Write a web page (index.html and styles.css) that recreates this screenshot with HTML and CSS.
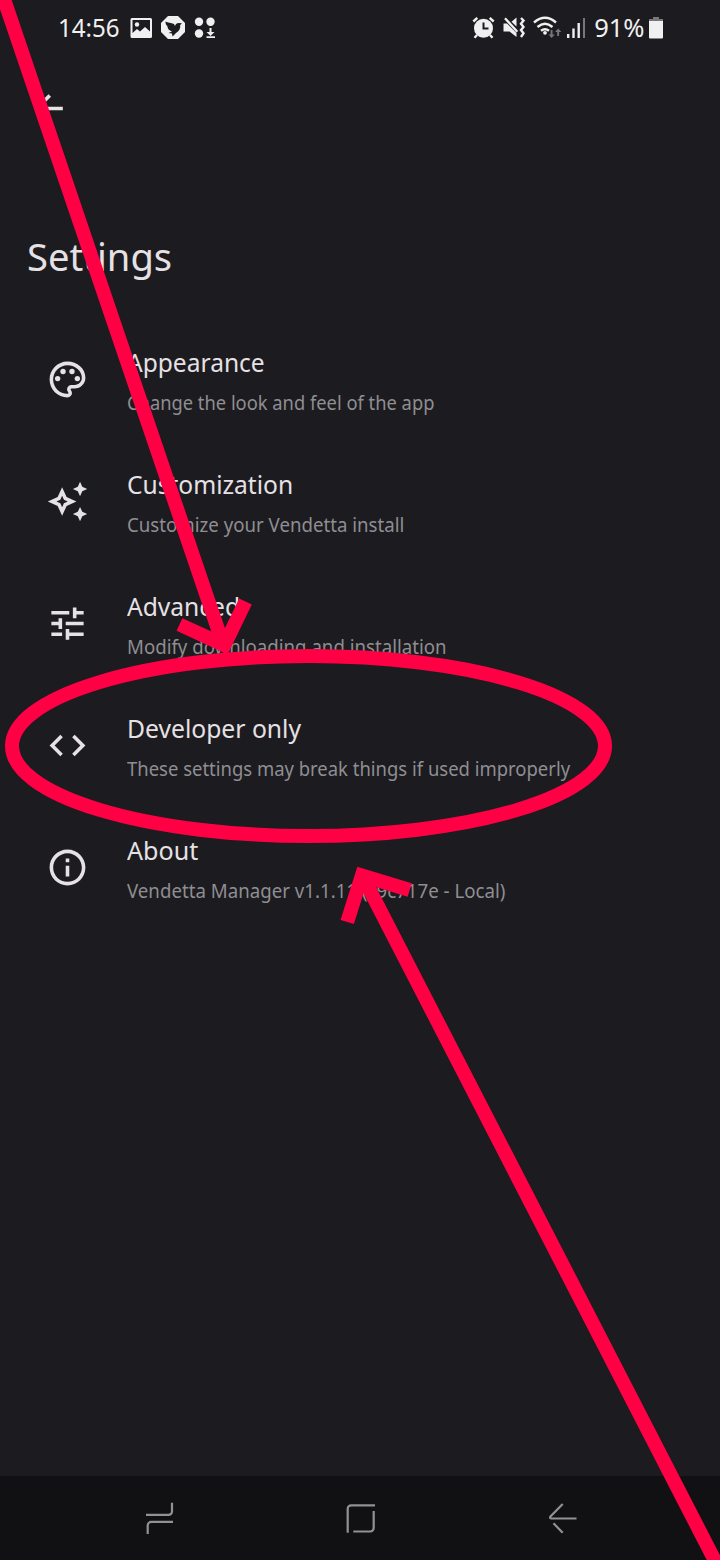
FILE: index.html
```html
<!DOCTYPE html>
<html lang="en">
<head>
<meta charset="utf-8">
<title>Settings</title>
<link rel="stylesheet" href="styles.css">
</head>
<body>
<div class="screen">
  <header class="status">
    <div class="status-left">
      <span class="clock">14:56</span>
      <svg class="notif" viewBox="130 15 86 26" width="86" height="26">
        <path fill-rule="evenodd" d="M132 18h18.500a1.500 1.500 0 0 1 1.500 1.500v17a1.500 1.500 0 0 1-1.500 1.500h-18.500a1.500 1.500 0 0 1-1.500-1.500v-17a1.500 1.500 0 0 1 1.500-1.500zM132.500 20v13l4.500-4 3 2.500 5-4.500 5 4.500V20z"/>
        <circle cx="137" cy="24.500" r="2.200"/>
        <path d="M168 16h10l7 7v9l-7 7h-10l-7-7v-9z"/>
        <path class="cut" d="M165.500 21.500c2.500 1.500 5.500 1 8.500 2.500l1 2c.500-2 2-3 3.500-3l3.500.300-1.800 1.700c.500 3.500-1.200 6.500-4.200 8l-3.500 3.500-.500-3-3.500-.500 3.500-1.500c-3-1-4.500-3-4.500-5-1.500-1.500-2-3-2-5z"/>
        <circle cx="199" cy="21.800" r="4.200"/><circle cx="210.500" cy="21.800" r="4.200"/><circle cx="199" cy="33.500" r="4.200"/>
        <path d="M209.500 28h2v4h3l-4 3.900-4-3.900h3zM206.500 36.200h8.500v1.800h-8.500z"/>
      </svg>
    </div>
    <div class="status-right">
      <svg viewBox="472 15 114 26" width="114" height="26">
        <circle cx="483.500" cy="28.300" r="9.500"/>
        <path class="line" d="M473.300 21.500l4-3.700M493.700 21.500l-4-3.700M477 35l-2.500 2.800M490 35l2.500 2.800"/>
        <path class="cutline" d="M483.500 22.500v6h5"/>
        <path d="M503.500 23.500h3.500l9.500 9.500V37l-7-5.500h-6zM511.500 21.800l5-4.300v9z"/>
        <path class="line" d="M505 18.300l12.300 13.500"/>
        <path class="line" d="M521 18l2.500 2.500-2.500 3.200 2.500 3.200-2.500 3.200 2.500 3.200-2.500 3.700"/>
        <path class="line" d="M534 22.500q11-9.500 22 0M537.500 27q7.500-6.500 15 0M541 30.800q4-3.200 8 0"/>
        <circle cx="545" cy="32.800" r="1.900"/>
        <g class="dim"><path d="M550.600 30h1.900v4.500h2.200l-3.100 3.500-3.100-3.500h2.100zM557.200 36h1.900v-4h2.200l-3.100-3.500-3.100 3.500h2.100z"/><path d="M583 18h2v20h-2z"/></g>
        <path d="M567 34h2.400v4h-2.400zM572.300 28.500h2.400v9.500h-2.400zM577.500 23h2.400v15h-2.400z"/>
      </svg>
      <span class="percent">91%</span>
      <svg class="battery" viewBox="649 15 14 26" width="14" height="26">
        <path class="dim" d="M653 17h6v2h4v3h-14v-3h4z"/>
        <path d="M649 21h14v16.500a1 1 0 0 1-1 1h-12a1 1 0 0 1-1-1z"/>
      </svg>
    </div>
  </header>

  <div class="appbar">
    <svg class="icon" viewBox="0 0 24 24"><path d="M20 11H7.830l5.590-5.590L12 4l-8 8 8 8 1.410-1.410L7.830 13H20z"/></svg>
  </div>

  <h1 class="title"><span>Settings</span></h1>

  <main class="list">
    <section class="row">
      <svg class="icon" viewBox="0 0 24 24"><path d="M12 22C6.490 22 2 17.510 2 12S6.490 2 12 2s10 4.040 10 9c0 3.310-2.690 6-6 6h-1.770c-.280 0-.500.220-.500.500 0 .120.050.230.130.330.410.470.640 1.060.640 1.670A2.500 2.500 0 0 1 12 22zm0-18c-4.410 0-8 3.590-8 8s3.590 8 8 8c.280 0 .500-.220.500-.500a.540.540 0 0 0-.140-.350c-.410-.460-.630-1.050-.630-1.650a2.500 2.500 0 0 1 2.500-2.500H16c2.210 0 4-1.790 4-4 0-3.860-3.590-7-8-7z"/><circle cx="6.500" cy="11.500" r="1.500"/><circle cx="9.500" cy="7.500" r="1.500"/><circle cx="14.500" cy="7.500" r="1.500"/><circle cx="17.500" cy="11.500" r="1.500"/></svg>
      <div class="texts"><h2 class="appearance">Appearance</h2><p class="appearance-note">Change the look and feel of the app</p></div>
    </section>
    <section class="row">
      <svg class="icon" viewBox="0 0 24 24"><path d="M19 9l1.250-2.750L23 5l-2.750-1.250L19 1l-1.250 2.750L15 5l2.750 1.250zM19 15l-1.250 2.750L15 19l2.750 1.250L19 23l1.250-2.750L23 19l-2.750-1.250zM11.500 9.500L9 4 6.500 9.500 1 12l5.500 2.500L9 20l2.500-5.500L17 12zm-1.510 3.490L9 15.170l-.990-2.180L5.830 12l2.180-.990L9 8.830l.990 2.180 2.180.990z"/></svg>
      <div class="texts"><h2 class="customization">Customization</h2><p class="customization-note">Customize your Vendetta install</p></div>
    </section>
    <section class="row">
      <svg class="icon" viewBox="0 0 24 24"><path d="M3 17v2h6v-2zM3 5v2h10V5zm10 16v-2h8v-2h-8v-2h-2v6zM7 9v2H3v2h4v2h2V9zm14 4v-2H11v2zm-6-4h2V7h4V5h-4V3h-2z"/></svg>
      <div class="texts"><h2 class="advanced">Advanced</h2><p class="advanced-note">Modify downloading and installation</p></div>
    </section>
    <section class="row">
      <svg class="icon" viewBox="0 0 24 24"><path d="M9.400 16.600L4.800 12l4.600-4.600L8 6l-6 6 6 6zm5.200 0l4.600-4.600-4.600-4.600L16 6l6 6-6 6z"/></svg>
      <div class="texts"><h2 class="developer">Developer only</h2><p class="developer-note">These settings may break things if used improperly</p></div>
    </section>
    <section class="row">
      <svg class="icon" viewBox="0 0 24 24"><path d="M11 7h2v2h-2zm0 4h2v6h-2zm1-9C6.480 2 2 6.480 2 12s4.480 10 10 10 10-4.480 10-10S17.520 2 12 2zm0 18c-4.410 0-8-3.590-8-8s3.590-8 8-8 8 3.590 8 8-3.590 8-8 8z"/></svg>
      <div class="texts"><h2 class="about">About</h2><p class="about-note">Vendetta Manager v1.1.11 (c9c717e - Local)</p></div>
    </section>
  </main>

  <nav class="navbar">
    <svg viewBox="0 0 34 36"><path d="M3 14.900h22.500a3.500 3.500 0 0 0 3.500-3.500V2.800M30 21.900H8.200a3.500 3.500 0 0 0-3.500 3.500V34"/></svg>
    <svg viewBox="0 0 34 36"><path d="M32 5.300H8.200a3.500 3.500 0 0 0-3.500 3.500v24M30.700 11v17a3.500 3.500 0 0 1-3.500 3.500H10.300"/></svg>
    <svg viewBox="0 0 34 36"><path d="M31.500 18.500H6.200q-2-.500-.500-2.300L17.700 4M8.500 23.300l9.200 9.500"/></svg>
  </nav>

  <svg class="markup" viewBox="0 0 720 1560">
    <ellipse cx="308.500" cy="746" rx="296.500" ry="90"/>
    <path d="M-2.500-20L224 647M179.500 624.500l44.900 20.700 21.100-43.700"/>
    <path d="M724.900 1580L362.500 876M347.200 922l14.700-46.500 47.800 14.500"/>
  </svg>
</div>
</body>
</html>
```

FILE: styles.css
```css
* { box-sizing: border-box; }

body {
  margin: 0;
  background: #1c1b1f;
  color: #e6e1e5;
  font-family: "Noto Sans", sans-serif;
}

h1, h2, p { margin: 0; font-weight: 400; white-space: nowrap; }

.screen {
  position: relative;
  display: flex;
  flex-direction: column;
  width: 720px;
  height: 1560px;
  overflow: hidden;
}

.status {
  display: flex;
  justify-content: space-between;
  height: 54px;
  padding: 0 57px 0 58px;
  color: #f0f0f0;
  font-size: 25px;
  line-height: 34px;
}

.status-left, .status-right { display: flex; align-items: center; }
.status svg { display: block; fill: #f0f0f0; margin-top: 2px; }
.status .cut { fill: #1c1b1f; }
.status .line { fill: none; stroke: #f0f0f0; stroke-width: 2.4; }
.status .cutline { fill: none; stroke: #1c1b1f; stroke-width: 2; }
.status .dim { fill: #77767a; }
.clock { width: 72px; transform: scaleX(.965); transform-origin: left; }
.percent { width: 63px; padding-left: 8px; transform: scaleX(1.02); transform-origin: left; }

.appbar { height: 175px; padding: 33px 27px; }

.icon { display: block; flex: none; width: 43px; height: 43px; fill: #e6e1e5; }

.title { height: 89px; padding-left: 27px; font-size: 39px; line-height: 54px; }
.title span { display: inline-block; transform: scaleX(.978); transform-origin: left; }

.list { flex: 1; }

.row {
  display: flex;
  align-items: center;
  gap: 36px;
  height: 122px;
  padding-left: 45.5px;
}

.texts { display: flex; flex-direction: column; align-items: flex-start; gap: 9px; padding: 2px 0 0 2px; }
.texts h2 { font-size: 26px; line-height: 36px; transform-origin: left; }
.texts p { font-size: 20px; line-height: 28px; color: #8f8e92; transform-origin: left; }

.appearance { transform: scaleX(.944); }
.customization { transform: scaleX(.945); }
.advanced { transform: scaleX(.945); }
.developer { transform: scaleX(.949); }
.about { transform: scaleX(.965); }
.appearance-note { transform: scaleX(.916); }
.customization-note { transform: scaleX(.933); }
.advanced-note { transform: scaleX(.932); }
.developer-note { transform: scaleX(.923); }
.about-note { transform: scaleX(.934); }

.navbar {
  display: flex;
  justify-content: space-between;
  height: 84px;
  padding: 24px 141px 0 143px;
  background: #111113;
}

.navbar svg { width: 34px; height: 36px; fill: none; stroke: #929292; stroke-width: 2.2; }
.navbar svg:nth-child(2) { margin-right: 3px; }

.markup {
  position: absolute;
  inset: 0;
  width: 720px;
  height: 1560px;
  fill: none;
  stroke: #ff0044;
  stroke-width: 14;
}
```
